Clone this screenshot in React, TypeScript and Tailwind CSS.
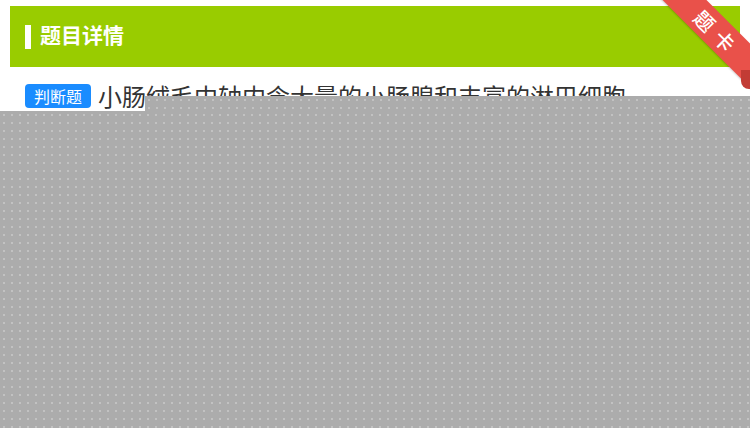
import React from 'react'

const cjk = { fontFamily: '"Noto Sans CJK SC", "Noto Sans", sans-serif' }

function Ribbon() {
  return (
    <div className="pointer-events-none absolute right-0 top-0 h-[100px] w-[100px] overflow-hidden">
      <div className="absolute left-[-5px] top-[15px] flex h-[31px] w-[140px] rotate-45 items-center justify-center bg-[#e9514a] shadow-[0_1px_2px_rgba(0,0,0,0.2)]">
        <span className="pl-[8px] text-[20px] font-medium leading-none tracking-[8px] text-white">
          题卡
        </span>
      </div>
      <div className="absolute right-0 top-[70px] h-[19px] w-[9px] rounded-bl-[8px] bg-[#c23c35]" />
    </div>
  )
}

export default function App() {
  return (
    <div className="relative h-[428px] w-full overflow-hidden bg-white" style={cjk}>
      <header className="mx-[10px] mt-[6px] flex h-[61px] items-center bg-[#99cc00] pl-[15px]">
        <div className="h-[24px] w-[6px] bg-white" />
        <h1 className="mb-[5px] ml-[9px] text-[21px] font-bold leading-none text-white">题目详情</h1>
      </header>
      <Ribbon />

      <div className="ml-[25px] mt-[16px] flex items-start gap-[7px]">
        <span className="mt-[1px] flex h-[24px] items-center rounded-[4px] bg-[#1a8cff] px-[9px] text-[16px] text-white">
          判断题
        </span>
        <p className="text-[24px] leading-[26px] text-[#333333]">
          小肠绒毛中轴内含大量的小肠腺和丰富的淋巴细胞
        </p>
      </div>

      {/* grey mask lying over the rest of the page */}
      <div className="absolute left-[145px] right-0 top-[96px] h-[15px] bg-[#acacac] bg-[radial-gradient(#c2c2c2_1.2px,transparent_1.4px)] bg-[length:8px_8px]" />
      <div className="absolute bottom-0 left-0 right-0 top-[111px] bg-[#acacac] bg-[radial-gradient(#c2c2c2_1.2px,transparent_1.4px)] bg-[length:8px_8px]" />
    </div>
  )
}
